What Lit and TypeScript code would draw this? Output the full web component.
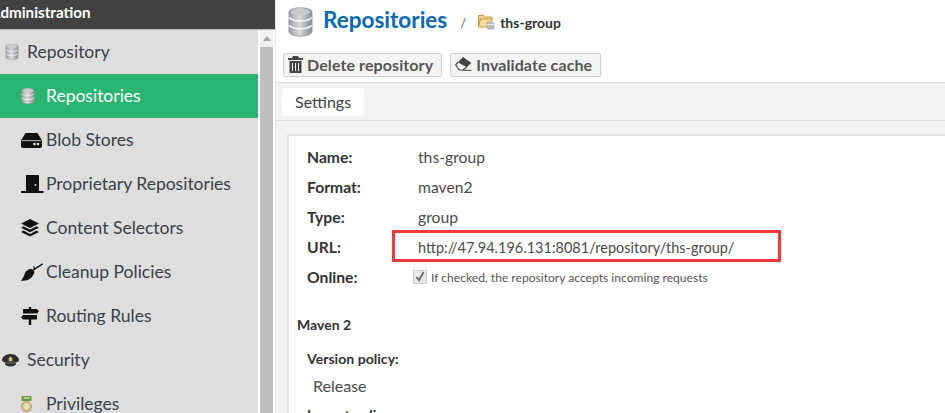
import { LitElement, html, css } from "lit";
import { customElement } from "lit/decorators.js";

const dbIcon = (w: number, h: number) => html`<svg width=${w} height=${h} viewBox="0 0 16 19">
  <defs><linearGradient id="g${w}" x1="0" x2="1" y1="0" y2="0"><stop offset="0" stop-color="#9a9da1"/><stop offset=".45" stop-color="#d9dadc"/><stop offset="1" stop-color="#8b8e92"/></linearGradient></defs>
  <path d="M.6 3.200C.6 1.500 3.800.4 8 .4s7.400 1.100 7.400 2.800v12.400c0 1.700-3.200 3-7.400 3s-7.400-1.300-7.400-3z" fill="url(#g${w})" stroke="#97999c" stroke-width=".5"/>
  <path d="M.8 6.600c1 1.500 3.600 2.200 7.200 2.200s6.200-.7 7.200-2.200M.8 11.600c1 1.500 3.600 2.200 7.200 2.200s6.200-.7 7.200-2.200" fill="none" stroke="#f4f4f4" stroke-width="1"/>
  <ellipse cx="8" cy="3.200" rx="6.200" ry="2.100" fill="#c9cbcd"/>
</svg>`;

const icons: Record<string, unknown> = {
  blob: html`<svg width="21" height="15" viewBox="0 0 21 15"><path d="M4.500 0h12L21 7.500v5.500a2 2 0 0 1-2 2H2a2 2 0 0 1-2-2V7.500z" fill="#111"/><path d="M1 7.600h19" stroke="#ddd" stroke-width=".8"/><circle cx="13.500" cy="11" r="1.300" fill="#ddd"/><circle cx="17" cy="11" r="1.300" fill="#ddd"/></svg>`,
  door: html`<svg width="23" height="18" viewBox="0 0 23 18"><path d="M5 0h13v16h4.500v2H0v-2h5z" fill="#111"/><circle cx="14.500" cy="10" r="1" fill="#ddd"/></svg>`,
  layers: html`<svg width="18" height="18" viewBox="0 0 18 18"><path d="M9 0l9 4.500-9 4.500-9-4.500z" fill="#111"/><path d="M2.500 7.300L9 10.600l6.500-3.300L18 8.800 9 13.300 0 8.800z" fill="#111"/><path d="M2.500 11.600L9 14.900l6.500-3.300L18 13.100 9 17.600 0 13.100z" fill="#111"/></svg>`,
  broom: html`<svg width="22" height="18" viewBox="0 0 22 18"><path d="M11.500 7.500L21.600.8" fill="none" stroke="#111" stroke-width="1.500"/><path d="M12.500 3.500l1.500 3" fill="none" stroke="#111" stroke-width="1.200"/><path d="M9 6c2-.5 4 1 4.500 3C12.300 13 10 16 6 17.300L0 18c1.800-2.500 3-5 4-8 1-2 3-3.500 5-4z" fill="#111"/></svg>`,
  sign: html`<svg width="18" height="18" viewBox="0 0 18 18"><path d="M7.800 0h2.400v2H16l2 2.300-2 2.300H2V2h5.800z" fill="#111"/><path d="M2 8h14v4.600H10.200V18H7.800v-5.400H2L0 10.300z" fill="#111"/></svg>`,
  hat: html`<svg width="17" height="13" viewBox="0 0 17 13"><path d="M0 6C0 3 4 0 8.500 0S17 3 17 6c0 1.500-2 2.300-3 2.500v2C12 12 10.500 12.500 8.500 12.500S5 12 3 10.500v-2C2 8.300 0 7.500 0 6z" fill="#2f2f2f"/><path d="M8.500 2.500l1.800 1.800v3H6.700v-3z" fill="#d8c77a"/><path d="M3 9h11" stroke="#8a8a8a" stroke-width=".8"/></svg>`,
  medal: html`<svg width="11" height="16" viewBox="0 0 11 16"><rect x=".5" y="0" width="10" height="5" fill="#6f9a4c"/><rect x="2.500" y="1" width="6" height="2" fill="#a9cf87"/><circle cx="5.500" cy="10.500" r="5" fill="#d7c48b" stroke="#b09a5d"/><circle cx="5.500" cy="10.500" r="2.800" fill="#eadfb8"/></svg>`,
};

@customElement("app-root")
export class AppRoot extends LitElement {
  static styles = css`
    :host { display: flex; width: 945px; height: 413px; overflow: hidden; background: #fff; font-family: Lato, "Open Sans", sans-serif; color: #333a41; }
    .side { width: 275px; flex: none; display: flex; flex-direction: column; }
    .adm { height: 29px; flex: none; background: #424242; color: #fff; font-weight: 700; font-size: 15.200px; line-height: 24px; overflow: hidden; white-space: nowrap; border-bottom: 1px solid #bdbdbd; }
    .adm span { display: block; margin-left: -10px; }
    .side-body { display: flex; flex: 1; min-height: 0; }
    .tree { width: 258px; flex: none; background: #dedede; overflow: hidden; }
    .row { height: 44px; display: flex; align-items: center; font-size: 17.500px; color: #3a4149; white-space: nowrap; }
    .row > span:last-child { padding-bottom: 1px; }
    .ic { width: 46px; flex: none; display: flex; box-sizing: border-box; }
    .l1 .ic { width: 27px; padding-right: 8px; justify-content: flex-end; }
    .l2 .ic { padding-left: 21px; }
    .row.on { background: #2ab573; color: #fff; }
    .scroll { width: 17px; flex: none; background: #fff; display: flex; flex-direction: column; padding-left: 2px; box-sizing: border-box; }
    .arrow { height: 17px; display: flex; justify-content: center; align-items: center; background: #f1f1f1; margin-right: 2px; }
    .arrow i { border: 4px solid transparent; border-top: 0; border-bottom: 5px solid #a3a3a3; }
    .thumb { flex: 1; background: #bebebe; margin-right: 2px; }
    .main { flex: 1; min-width: 0; display: flex; flex-direction: column; border-left: 1px solid #e8e8e8; }
    .title { height: 48px; flex: none; display: flex; align-items: center; padding: 0 0 5px 12px; box-sizing: border-box; }
    .title h1 { margin: 0 0 4px 10px; font-size: 22.500px; font-weight: 700; color: #0a68b4; }
    .sep { margin: 2px 12px 0 13px; font-size: 13px; color: #555; }
    .crumb { font-size: 14px; font-weight: 700; color: #333; margin-left: 5px; margin-top: 1px; }
    .tools { height: 35px; flex: none; display: flex; align-items: flex-start; gap: 8px; padding: 5px 0 0 7px; box-sizing: border-box; border-bottom: 1px solid #dcdcdc; }
    .btn { height: 24px; box-sizing: border-box; display: flex; align-items: center; gap: 4px; padding: 0 8px 2px 4px; border: 1px solid #cfcfcf; border-radius: 2px; background: #f4f4f4; font-weight: 700; font-size: 16px; letter-spacing: .1px; color: #555; }
    .tabs { height: 38px; flex: none; background: #f3f3f3; border-bottom: 1px solid #dcdcdc; padding: 5px 0 0 6px; box-sizing: border-box; }
    .tab { display: inline-block; height: 28px; line-height: 28px; padding: 0 13px; background: #fff; border-radius: 4px; font-size: 16px; color: #3a4149; }
    .panelwrap { flex: 1; background: #f3f3f3; padding: 13px 0 0 11px; min-height: 0; }
    .panel { height: 100%; background: #fff; border: 2px solid #e4e4e4; border-right: 0; border-bottom: 0; padding: 6px 0 0 8px; box-sizing: border-box; overflow: hidden; }
    dl { margin: 0 0 0 10px; display: grid; grid-template-columns: 111px 1fr; grid-auto-rows: 30px; align-items: center; font-size: 15.700px; }
    dt { font-weight: 700; color: #333; }
    dd { margin: 0; color: #4c4c4c; }
    .url { position: relative; font-size: 14.500px; }
    .redbox { position: absolute; left: -26px; top: -9px; width: 383px; height: 26px; border: 3px solid #f23838; pointer-events: none; }
    .check { display: flex; align-items: center; gap: 4px; font-size: 12.100px; color: #555; margin-left: -5px; }
    .box { width: 14px; height: 14px; flex: none; box-sizing: border-box; background: #e8e8e8; border: 1px solid #c9c9c9; display: block; }
    h3 { margin: 23px 0 0 0; font-size: 14px; font-weight: 700; color: #333; line-height: 20px; }
    .pol { margin: 14px 0 0 10px; font-size: 14.100px; font-weight: 700; color: #333; line-height: 20px; }
    .rel { margin: 7px 0 0 16px; font-size: 16px; color: #4c4c4c; line-height: 20px; }
    .rel + .pol { margin-top: 9px; }
  `;

  private row(level: number, label: string, icon: unknown, on = false) {
    return html`<div class="row l${level} ${on ? "on" : ""}"><span class="ic">${icon}</span><span>${label}</span></div>`;
  }

  render() {
    return html`
      <div class="side">
        <div class="adm"><span>Administration</span></div>
        <div class="side-body">
          <div class="tree">
            ${this.row(1, "Repository", dbIcon(14, 16))}
            ${this.row(2, "Repositories", dbIcon(14, 16), true)}
            ${this.row(2, "Blob Stores", icons.blob)}
            ${this.row(2, "Proprietary Repositories", icons.door)}
            ${this.row(2, "Content Selectors", icons.layers)}
            ${this.row(2, "Cleanup Policies", icons.broom)}
            ${this.row(2, "Routing Rules", icons.sign)}
            ${this.row(1, "Security", icons.hat)}
            ${this.row(2, "Privileges", icons.medal)}
          </div>
          <div class="scroll"><div class="arrow"><i></i></div><div class="thumb"></div></div>
        </div>
      </div>
      <div class="main">
        <div class="title">
          ${dbIcon(25, 30)}
          <h1>Repositories</h1>
          <span class="sep">/</span>
          <svg width="17" height="16" viewBox="0 0 17 16"><path d="M.5 13V1.500h5l1 1.500h7.500v2" fill="#f3cf8d" stroke="#c99a45"/><path d="M.5 13l2-8h12l-1 3H9v5z" fill="#f6dc9e" stroke="#c99a45"/><rect x="9" y="8" width="7.500" height="7.500" rx="2" fill="#b9bcbf"/><path d="M9 10.500h7.500" stroke="#eee"/></svg>
          <span class="crumb">ths-group</span>
        </div>
        <div class="tools">
          <div class="btn"><svg width="15" height="17" viewBox="0 0 15 17"><path d="M5 0h5l1 2h4v2H0V2h4zM1.500 5h12v12h-12z" fill="#444"/><path d="M4.500 7v8M7.500 7v8M10.500 7v8" stroke="#f4f4f4" stroke-width="1"/></svg>Delete repository</div>
          <div class="btn"><svg width="17" height="14" viewBox="0 0 17 14"><path d="M8 0l8.500 6-5 4.200L3 5.200z" fill="#444"/><path d="M3 5.200L.7 8l3.600 5H8l3.500-2.800" fill="none" stroke="#444" stroke-width="1.200"/><path d="M8 13.300h8.500" stroke="#444"/></svg>Invalidate cache</div>
        </div>
        <div class="tabs"><span class="tab">Settings</span></div>
        <div class="panelwrap">
          <div class="panel">
            <dl>
              <dt>Name:</dt><dd>ths-group</dd>
              <dt>Format:</dt><dd>maven2</dd>
              <dt>Type:</dt><dd>group</dd>
              <dt>URL:</dt><dd class="url">http://47.94.196.131:8081/repository/ths-group/<span class="redbox"></span></dd>
              <dt>Online:</dt>
              <dd class="check"><svg class="box" viewBox="0 0 13 13"><path d="M2.500 6.500l3 3.500 5-9" fill="none" stroke="#666" stroke-width="2"/></svg>If checked, the repository accepts incoming requests</dd>
            </dl>
            <h3>Maven 2</h3>
            <div class="pol">Version policy:</div>
            <div class="rel">Release</div>
            <div class="pol">Layout policy:</div>
          </div>
        </div>
      </div>
    `;
  }
}
